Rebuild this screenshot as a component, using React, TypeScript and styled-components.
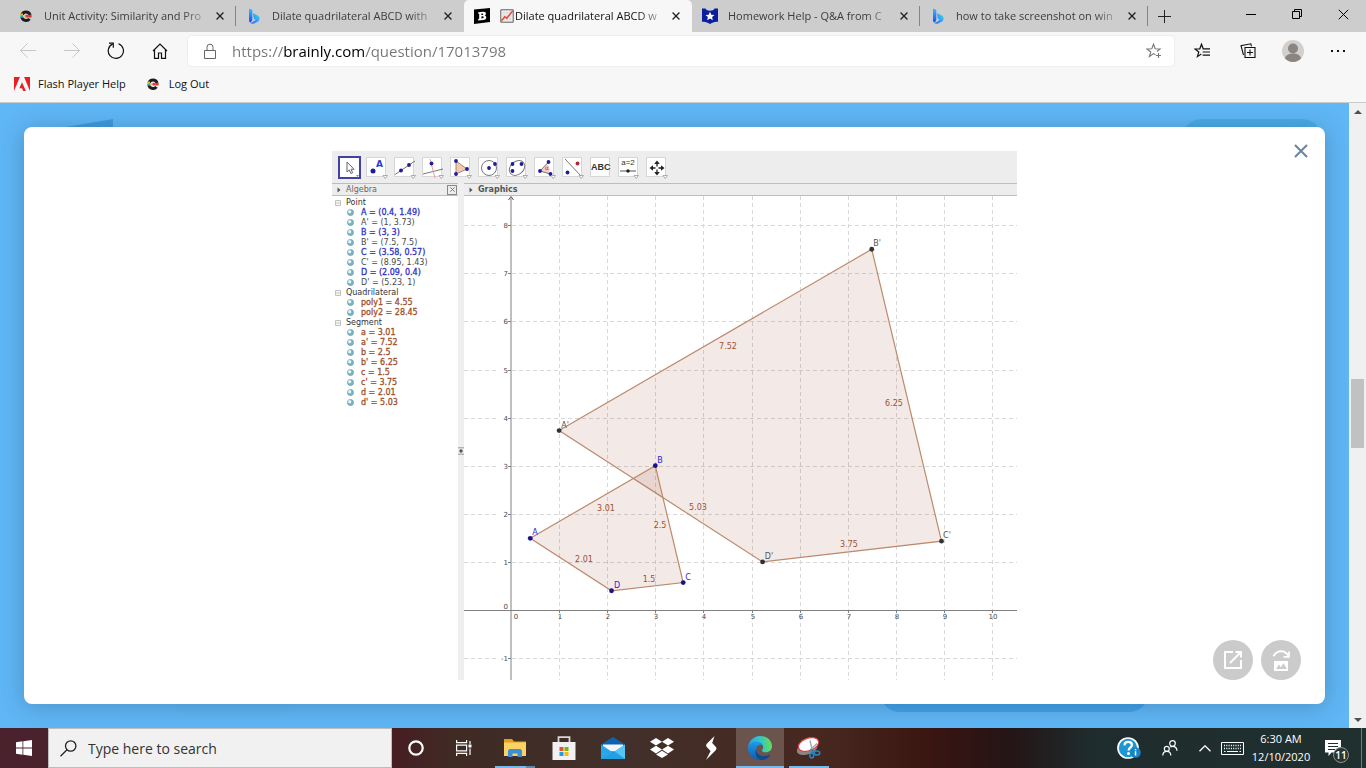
import React from "react";
import styled, { createGlobalStyle, css } from "styled-components";

const GlobalStyle = createGlobalStyle`
  *, *::before, *::after { box-sizing: border-box; }
  html, body { margin: 0; }
  body {
    font-family: "Segoe UI", "Open Sans", "Noto Sans", sans-serif;
    font-size: 12px;
    color: #111;
    background: #60b7f5;
  }
  button {
    font: inherit;
    color: inherit;
    margin: 0;
    padding: 0;
    border: 0;
    background: none;
  }
  svg { display: block; flex: none; }
`;

const Window = styled.div`
  min-height: 100vh;
  display: flex;
  flex-direction: column;
`;

/* ---------- tab strip ---------- */

const TabStrip = styled.header`
  height: 32px;
  display: flex;
  align-items: stretch;
  padding-left: 8px;
  background: #cdcdcd;
`;

const Tabs = styled.div`
  display: flex;
  min-width: 0;
`;

const Tab = styled.div<{ $active?: boolean; $divided?: boolean }>`
  width: 228px;
  min-width: 0;
  display: flex;
  align-items: center;
  padding: 0 8px 0 10px;
  color: ${(p) => (p.$active ? "#111" : "#3c3c3c")};
  background:
    ${(p) => (p.$divided ? "linear-gradient(#858585, #858585) right 6px / 1px 20px no-repeat" : "none")};
  ${(p) =>
    p.$active &&
    css`
      background: #f7f7f7;
      border-radius: 5px 5px 0 0;
    `}
`;

const TabTitle = styled.button`
  flex: 1;
  min-width: 0;
  display: flex;
  align-items: center;
  gap: 10px;
  height: 32px;
  text-align: left;
`;

const TabText = styled.span`
  flex: 1;
  min-width: 0;
  display: flex;
  align-items: center;
  gap: 1px;
  white-space: nowrap;
  font-size: 11px;
  line-height: 16px;
  mask-image: linear-gradient(to right, #000 calc(100% - 30px), transparent);
`;

const TabClose = styled.button`
  width: 16px;
  height: 16px;
  display: grid;
  place-items: center;
`;

const NewTab = styled.button`
  width: 32px;
  display: grid;
  place-items: center;
`;

const WindowControls = styled.div`
  margin-left: auto;
  display: flex;
`;

const WindowButton = styled.button`
  width: 46px;
  height: 28px;
  display: grid;
  place-items: center;
`;

/* ---------- toolbar ---------- */

const Toolbar = styled.div`
  background: #f7f7f7;
  border-bottom: 1px solid #cbcbcb;
  padding-bottom: 4px;
`;

const NavRow = styled.div`
  height: 38px;
  display: flex;
  align-items: center;
  padding: 0 6px 0 10px;
`;

const NavButtons = styled.nav`
  display: flex;
  gap: 8px;
  margin-right: 10px;
`;

const NavButton = styled.button`
  width: 36px;
  height: 30px;
  display: grid;
  place-items: center;
`;

const AddressBar = styled.div`
  flex: 1;
  min-width: 0;
  height: 30px;
  display: flex;
  align-items: center;
  padding: 0 2px 0 15px;
  gap: 15px;
  background: #fff;
  border-radius: 4px;
  box-shadow: 0 0 2px rgba(0, 0, 0, 0.12);
  margin-right: 6px;
`;

const AddressInput = styled.input`
  flex: 1;
  min-width: 0;
  height: 28px;
  padding: 0;
  border: 0;
  outline: 0;
  font-family: inherit;
  font-size: 15px;
  color: transparent;
  background: linear-gradient(to right, #757575 52px, #000 52px, #000 133px, #757575 133px);
  background-clip: text;
  -webkit-background-clip: text;
`;

const ToolButton = styled.button`
  width: 45px;
  height: 30px;
  display: grid;
  place-items: center;
`;

const Bookmarks = styled.nav`
  height: 28px;
  display: flex;
  align-items: center;
  gap: 19px;
  padding-left: 14px;
`;

const Bookmark = styled.a`
  display: flex;
  align-items: center;
  gap: 8px;
  color: #111;
  font-size: 11px;
  line-height: 16px;
  text-decoration: none;
`;

/* ---------- page ---------- */

const Page = styled.main`
  flex: 1;
  display: flex;
  align-items: stretch;
`;

const Backdrop = styled.div`
  position: relative;
  flex: 1;
  min-width: 0;
  overflow: hidden;
  padding: 24px;
  background: #60b7f5;
`;

const SHADES = {
  header: "right: 27px; top: 16px; width: 140px; background: #49ade6;",
  answer: "left: 880px; bottom: 16px; width: 269px; background: #44a3e6;",
  faint: "left: 174px; bottom: 10px; width: 123px; background: #5fb6f2;",
};

const Shade = styled.span<{ $kind: keyof typeof SHADES }>`
  position: absolute;
  height: 40px;
  border-radius: 20px;
  ${(p) => SHADES[p.$kind]}
`;

const LogoCorner = styled.svg`
  position: absolute;
  left: 66px;
  top: 16px;
`;

const Modal = styled.section`
  position: relative;
  height: 100%;
  display: flex;
  justify-content: center;
  align-items: flex-start;
  padding: 24px;
  background: #fff;
  border-radius: 8px;
  box-shadow: 0 2px 24px rgba(20, 50, 90, 0.3);
`;

const ModalClose = styled.button`
  position: absolute;
  top: 14px;
  right: 14px;
  width: 20px;
  height: 20px;
  display: grid;
  place-items: center;
`;

const ModalActions = styled.div`
  position: absolute;
  right: 24px;
  bottom: 24px;
  display: flex;
  gap: 8px;
`;

const RoundButton = styled.button`
  width: 40px;
  height: 40px;
  border-radius: 50%;
  background: #cbcbcb;
  display: grid;
  place-items: center;
`;

const ScrollBar = styled.div`
  width: 17px;
  display: flex;
  flex-direction: column;
  align-items: center;
  background: #f0f0f0;
`;

const ScrollArrow = styled.button`
  width: 17px;
  height: 17px;
  display: grid;
  place-items: center;
`;

const ScrollTrack = styled.div`
  flex: 1;
  display: flex;
  flex-direction: column;
  align-items: center;
`;

const ScrollSpace = styled.div<{ $grow: number }>`
  flex: ${(p) => p.$grow};
`;

const ScrollThumb = styled.div`
  width: 13px;
  height: 69px;
  background: #c1c1c1;
`;

/* ---------- geometry figure ---------- */

const Figure = styled.figure`
  margin: 0;
  width: 685px;
  font-family: "Lucida Grande", "DejaVu Sans", sans-serif;
  font-size: 8px;
  line-height: 10px;
  color: #333;
  background: #fff;
`;

const Tools = styled.div`
  height: 32px;
  display: flex;
  align-items: center;
  gap: 8px;
  padding-left: 6px;
  background: #ededed;
`;

const Tool = styled.button<{ $selected?: boolean }>`
  width: 20px;
  height: 20px;
  display: grid;
  place-items: center;
  background: #fff;
  border: 1px solid #d6d6d6;
  ${(p) =>
    p.$selected &&
    css`
      width: 23px;
      height: 23px;
      margin-right: -3px;
      border: 2px solid #4242a2;
    `}
`;

const ToolLabel = styled.span<{ $small?: boolean }>`
  font-family: "Liberation Sans", Arial, sans-serif;
  font-size: ${(p) => (p.$small ? 8 : 9)}px;
  font-weight: ${(p) => (p.$small ? 400 : 700)};
  line-height: 8px;
  color: #333;
`;

const Panels = styled.div`
  display: flex;
`;

const AlgebraPanel = styled.div`
  width: 126px;
`;

const GraphicsPanel = styled.div`
  flex: 1;
  min-width: 0;
`;

const PanelHead = styled.div<{ $bold?: boolean }>`
  height: 13px;
  display: flex;
  align-items: center;
  gap: 5px;
  padding: 0 1px 0 5px;
  background: #ededed;
  border-top: 1px solid #bdbdbd;
  border-bottom: 1px solid #bdbdbd;
  font-weight: ${(p) => (p.$bold ? 700 : 400)};
  color: ${(p) => (p.$bold ? "#555" : "#666")};
`;

const PanelClose = styled.button`
  margin-left: auto;
  width: 10px;
  height: 10px;
  display: grid;
  place-items: center;
  border: 1px solid #888;
`;

const Splitter = styled.div`
  width: 6px;
  display: grid;
  place-items: center;
  padding-top: 38px;
  background: #efefef;
`;

const ObjectList = styled.ul`
  list-style: none;
  margin: 0;
  padding: 2px 0 0;
`;

const GroupRow = styled.li`
  height: 10px;
  display: flex;
  align-items: center;
  gap: 5px;
  padding-left: 3px;
  white-space: nowrap;
`;

const ObjectRow = styled.li<{ $tone: string }>`
  height: 10px;
  display: flex;
  align-items: center;
  gap: 7px;
  padding-left: 15px;
  white-space: nowrap;
  color: ${(p) => p.$tone};
  -webkit-text-stroke: ${(p) => (p.$tone === GREY ? "0" : "0.3px")} currentColor;
`;

/* ---------- task bar ---------- */

const TaskBar = styled.footer`
  height: 40px;
  display: flex;
  align-items: stretch;
  color: #fff;
  background: linear-gradient(
    to right,
    #49222d 0,
    #471d22 392px,
    #3f2a24 450px,
    #42302a 620px,
    #46271f 830px,
    #3a1511 930px,
    #241416 1010px,
    #1f2c2d 1090px,
    #20302f 100%
  );
`;

const TaskButton = styled.button<{ $active?: boolean; $open?: boolean; $stacked?: boolean }>`
  width: 48px;
  display: grid;
  place-items: center;
  background: ${(p) => (p.$active ? "#6b544e" : "none")};
  ${(p) =>
    p.$active || p.$open
      ? css`
          background-image: linear-gradient(
            to right,
            #76b9ed 31px,
            ${p.$stacked ? "#5c88aa" : "#76b9ed"} 31px
          );
          background-repeat: no-repeat;
          background-position: bottom;
          background-size: ${p.$active ? "48px" : "40px"} 2px;
        `
      : ""}
`;

const SearchBox = styled.label`
  width: 344px;
  display: flex;
  align-items: center;
  gap: 11px;
  padding-left: 11px;
  border: 1px solid #bdbdbd;
  background: #f1f1f1;
`;

const SearchInput = styled.input`
  flex: 1;
  min-width: 0;
  padding: 0;
  border: 0;
  outline: 0;
  background: none;
  font-family: inherit;
  font-size: 14px;
  &::placeholder {
    color: #333;
    opacity: 1;
  }
`;

const Apps = styled.div`
  display: flex;
  gap: 1px;
  margin-left: 3px;
`;

const Tray = styled.div`
  margin-left: auto;
  display: flex;
  align-items: stretch;
`;

const TrayButton = styled.button<{ $width: number }>`
  width: ${(p) => p.$width}px;
  display: grid;
  place-items: center;
`;

const Clock = styled.button`
  width: 72px;
  display: flex;
  flex-direction: column;
  align-items: center;
  justify-content: center;
  font-size: 11px;
  line-height: 18px;
`;

const Notifications = styled.button`
  position: relative;
  width: 44px;
  display: flex;
  align-items: center;
  padding-left: 8px;
`;

const Count = styled.span`
  position: absolute;
  left: 16px;
  top: 19px;
  width: 16px;
  height: 16px;
  border: 1px solid #8c9494;
  border-radius: 50%;
  background: #2d3334;
  font-size: 10px;
  font-weight: 600;
  line-height: 14px;
  text-align: center;
`;

const ShowDesktop = styled.button`
  width: 5px;
  border-left: 1px solid #6f7a7b;
`;

/* ---------- icons ---------- */

const Cross = ({ size = 9, color = "#222", width = 1.3 }: { size?: number; color?: string; width?: number }) => (
  <svg width={size} height={size} viewBox="0 0 10 10" stroke={color} strokeWidth={(width * 10) / size} fill="none">
    <path d="M.7.7l8.6 8.6M9.3.7L.7 9.3" />
  </svg>
);

const EdmentumIcon = () => (
  <svg width="16" height="16" viewBox="0 0 16 16" fill="none">
    <path d="M3.900 7a4.300 4.300 0 0 1 8.200 0" stroke="#1c1c1c" strokeWidth="3" />
    <path d="M3.900 9a4.300 4.300 0 0 0 7.600 1.900" stroke="#1c1c1c" strokeWidth="3" />
    <path d="M2.500 5.500h2.500v2H2.500z" fill="#f2b51c" />
    <path d="M2.300 7.500H5v2.200H2.300z" fill="#28a3c4" />
    <path d="M5 7h2.500v2.500H5z" fill="#c9dd4a" />
    <path d="M7.500 6.800h2.800v2.700H7.500z" fill="#e8306d" />
    <path d="M10.300 6.800h3.300v2.700h-3.300z" fill="#e0301e" />
  </svg>
);

const BingIcon = () => (
  <svg width="16" height="16" viewBox="0 0 16 16">
    <defs>
      <linearGradient id="bingStem" x1="0" y1="0" x2="0" y2="1">
        <stop offset="0" stopColor="#37bdff" />
        <stop offset="1" stopColor="#1b48ef" />
      </linearGradient>
      <linearGradient id="bingBowl" x1="0" y1="1" x2="1" y2="0">
        <stop offset="0" stopColor="#2a67f2" />
        <stop offset="1" stopColor="#3cd8f2" />
      </linearGradient>
    </defs>
    <path d="M3 .5l2.600.9c.5.2.7.5.7 1V12l-1.500 2.500C3.500 14.200 3 13.400 3 12.400z" fill="url(#bingStem)" />
    <path d="M7.400 5.300l4.400 2.100c1.200.7 1.800 1.800 1.800 3 0 1.400-.8 2.600-2 3.300l-3.400 1.700c-1.300.6-3 .4-4.200-.7 1.300 0 2.100-.4 3-1l2.700-2-1.200-.7c-.5-.3-.8-.7-.9-1.200L7 6c-.1-.5.1-.8.4-.7z" fill="url(#bingBowl)" />
  </svg>
);

const BrainlyIcon = () => (
  <svg width="16" height="16" viewBox="0 0 16 16">
    <path d="M0 1.500L16 0v14L0 16z" fill="#000" />
    <path
      d="M4.200 4.200l5-.4c1.800-.1 2.700.6 2.700 1.900 0 .9-.5 1.500-1.300 1.800 1.100.2 1.700.9 1.700 2 0 1.500-1.100 2.400-3 2.500l-5.100.4v-1.500l1-.2V5.800l-1-.1zM7.400 5.600v1.500l1-.1c.6 0 .9-.3.9-.8s-.3-.7-.9-.7zM7.400 8.400v2l1.200-.1c.7 0 1-.4 1-1s-.4-1-1-1z"
      fill="#fff"
      fillRule="evenodd"
    />
  </svg>
);

const ChartEmoji = () => (
  <svg width="14" height="14" viewBox="0 0 14 14">
    <path d="M.8.8h12.400v12.400H.8z" fill="#f4f2f2" stroke="#5a5a5a" />
    <path d="M1 4h12M1 7h12M1 10h12M4 1v12M7 1v12M10 1v12" stroke="#cfc9c9" strokeWidth=".6" />
    <path d="M1.500 11.800l3.300-4 2 1.400L12.600 2" fill="none" stroke="#e5442f" strokeWidth="1.400" />
  </svg>
);

const StarBadge = () => (
  <svg width="16" height="16" viewBox="0 0 16 16">
    <path d="M0 .6h3.500c.7 1.800 2.200 2.200 4.500 2.200s3.800-.4 4.500-2.200H16v13.200c-3 0-5.600.6-8 2.200-2.400-1.600-5-2.200-8-2.200z" fill="#0b1e9d" />
    <path d="M8 3.800l1.300 2.900 3.200.3-2.400 2.100.7 3.100L8 10.600l-2.800 1.600.7-3.100L3.500 7l3.200-.3z" fill="#fff" />
  </svg>
);

const AdobeIcon = () => (
  <svg width="16" height="14" viewBox="0 0 16 14">
    <path d="M0 0h5.900L0 14zM10.100 0H16v14zM8 5.200l3.900 8.800H9.200L8 11.200H5.400z" fill="#ee1c25" />
  </svg>
);

const BackIcon = ({ flip }: { flip?: boolean }) => (
  <svg width="16" height="16" viewBox="0 0 16 16" fill="none" stroke="#c6c6c6">
    {flip ? <path d="M0 7.500h15.500M8.500.5l7 7-7 7" /> : <path d="M16 7.500H.5M7.500.5l-7 7 7 7" />}
  </svg>
);

const ReloadIcon = () => (
  <svg width="18" height="18" viewBox="0 0 18 18" fill="none" stroke="#111" strokeWidth="1.200">
    <path d="M11.500 1.700a7.600 7.600 0 1 1-5.800.2" />
    <path d="M2 1.200h4.300v4.600" />
  </svg>
);

const HomeIcon = () => (
  <svg width="16" height="16" viewBox="0 0 16 16" fill="none" stroke="#111" strokeWidth="1.200">
    <path d="M1 8l7-7 7 7M2.500 7v8.400H6.500V10h3v5.400h4V7" />
  </svg>
);

const LockIcon = () => (
  <svg width="14" height="17" viewBox="0 0 14 17" fill="none" stroke="#666">
    <path d="M1.500 7.500h11v8h-11zM4 7.500V4.200a3 3 0 0 1 6 0v3.300" />
  </svg>
);

const AddFavoriteIcon = () => (
  <svg width="16" height="16" viewBox="0 0 16 16" fill="none" stroke="#777" strokeWidth="1.100">
    <path d="M9.600 11.900l-2.100-1.300-4.100 2.900L4.800 9 .9 6l4.900-.2 1.700-4.600 1.700 4.600 4.900.2-3.200 2.500" />
    <path d="M12.500 10v5M10 12.500h5" />
  </svg>
);

const FavoritesIcon = () => (
  <svg width="17" height="16" viewBox="0 0 17 16" fill="none" stroke="#111" strokeWidth="1.200">
    <path d="M9.800 5.800l-.6 0-1.700-4.600-1.700 4.600L.9 6l3.900 3-1.400 4.700 3.900-2.600" />
    <path d="M9.500 5.900h6.500M8.600 9h7.400M8.600 12.100h7.400" />
  </svg>
);

const CollectionsIcon = () => (
  <svg width="16" height="16" viewBox="0 0 16 16" fill="none" stroke="#111" strokeWidth="1.100">
    <path d="M5 4.500h10v10H5zM10 6.500v6M7 9.500h6" />
    <path d="M3.500 12L1 2.600 10.800.8l.7 2.600" />
  </svg>
);

const AvatarIcon = () => (
  <svg width="22" height="22" viewBox="0 0 22 22">
    <circle cx="11" cy="11" r="11" fill="#d2d0ce" />
    <circle cx="11" cy="8.500" r="5" fill="#8a8580" />
    <path d="M2.800 18.300a8.400 6 0 0 1 16.400 0A11 11 0 0 1 11 22a11 11 0 0 1-8.200-3.700z" fill="#8a8580" />
  </svg>
);

const OpenIcon = () => (
  <svg width="20" height="20" viewBox="0 0 20 20" fill="none" stroke="#fff" strokeWidth="2">
    <path d="M10 2H2v16h16v-8M12.500 2H18v5.500M17.500 2.500L7 13" />
  </svg>
);

const RotateImageIcon = () => (
  <svg width="20" height="22" viewBox="0 0 20 22" fill="none">
    <path d="M2.500 7.200C4.500 3.400 7.500 2.200 10.200 2.200c3 0 5.300 1.500 7.300 4.500" stroke="#fff" strokeWidth="1.900" />
    <path d="M18 2.600v5.200h-5.500" stroke="#fff" strokeWidth="1.700" />
    <path d="M3 12h14v10H3z" fill="#fff" />
    <path d="M5 20l3-4.500 1.800 2.700 2.700-4L16 20z" fill="#cbcbcb" />
  </svg>
);

/* ---------- geometry tool drawings ---------- */

const BLUE = "#1d1d9c";

const Dot = ({ x, y, fill = BLUE, r = 1.9 }: { x: number; y: number; fill?: string; r?: number }) => (
  <circle cx={x} cy={y} r={r} fill={fill} />
);

const toolArt: { name: string; art: React.ReactNode }[] = [
  { name: "Move", art: <path d="M7 4v10l2.300-2 1.600 3.500 1.700-.8-1.500-3.400h3z" fill="#fff" stroke="#666" /> },
  {
    name: "Point",
    art: (
      <>
        <Dot x={6} y={13} r={2.5} />
        <text x="9" y="9" fontSize="9" fontWeight="700" fill="#2a3ed0">
          A
        </text>
      </>
    ),
  },
  {
    name: "Line",
    art: (
      <>
        <path d="M0 16.500L20 3" stroke="#777" />
        <Dot x={6} y={12.5} />
        <Dot x={14} y={7} />
      </>
    ),
  },
  {
    name: "Perpendicular line",
    art: (
      <>
        <path d="M0 16l20-5" stroke="#777" />
        <path d="M7 1l5 19" stroke="#eb9a9a" />
        <Dot x={8.5} y={5.5} />
      </>
    ),
  },
  {
    name: "Polygon",
    art: (
      <>
        <path d="M5 3l11 8-11 5z" fill="#efc9b4" stroke="#b98262" />
        <Dot x={5} y={3} />
        <Dot x={16} y={11} />
        <Dot x={5} y={16} />
      </>
    ),
  },
  {
    name: "Circle",
    art: (
      <>
        <circle cx="10" cy="10" r="7.500" fill="none" stroke="#777" />
        <Dot x={10} y={10} />
        <Dot x={16} y={6} />
      </>
    ),
  },
  {
    name: "Conic",
    art: (
      <>
        <ellipse cx="10" cy="10" rx="8.500" ry="6.500" fill="none" stroke="#777" transform="rotate(-40 10 10)" />
        <Dot x={5.5} y={6} />
        <Dot x={14.5} y={6} />
        <Dot x={5.5} y={13} />
      </>
    ),
  },
  {
    name: "Angle",
    art: (
      <>
        <path d="M5 13l6.500-7a7 7 0 0 1 2 9.500z" fill="#f9cccc" />
        <path d="M13.500 4L5 13l10.500 3" fill="none" stroke="#777" />
        <text x="10" y="12" fontSize="6" fill="#d33">
          α
        </text>
        <Dot x={13.5} y={4} />
        <Dot x={5} y={13} />
        <Dot x={15.5} y={16} />
      </>
    ),
  },
  {
    name: "Reflect",
    art: (
      <>
        <path d="M2 1l17 18" stroke="#777" />
        <Dot x={14.5} y={5.5} fill="#a8283a" />
        <Dot x={4.5} y={14.5} />
      </>
    ),
  },
  { name: "Text", art: null },
  { name: "Slider", art: null },
  {
    name: "Move view",
    art: (
      <>
        <path d="M10 4v12M4 10h12" stroke="#222" strokeWidth="1.300" strokeDasharray="4.500 3" />
        <path d="M10 2.500L12.800 6H7.200zM10 17.500L7.200 14h5.600zM2.500 10L6 7.200v5.600zM17.500 10L14 12.800V7.200z" fill="#222" />
      </>
    ),
  },
];

const DropMark = () => <path d="M16 17.500h4.500l-2.200 3z" fill="#fff" stroke="#999" strokeWidth=".8" />;

const ToolIcon = ({ art, small }: { art: React.ReactNode; small?: boolean }) => (
  <svg width="20" height="20" viewBox="0 0 20 20" overflow="visible">
    {art}
    {small ? <path d="M16 17h3l-1.500 2z" fill="#888" /> : <DropMark />}
  </svg>
);

const MiniSlider = () => (
  <svg width="18" height="6" viewBox="0 0 18 6" overflow="visible">
    <path d="M1 2h16" stroke="#555" />
    <circle cx="9" cy="2" r="1.700" fill="#222" />
    <path d="M15 6.500h4.500l-2.200 3z" fill="#fff" stroke="#999" strokeWidth=".8" />
  </svg>
);

/* ---------- algebra objects ---------- */

const GREY = "#484848";
const INK = "#3333c8";
const BROWN = "#a0522d";

const groups = [
  {
    title: "Point",
    items: [
      ["A = (0.4, 1.49)", INK],
      ["A' = (1, 3.73)", GREY],
      ["B = (3, 3)", INK],
      ["B' = (7.5, 7.5)", GREY],
      ["C = (3.58, 0.57)", INK],
      ["C' = (8.95, 1.43)", GREY],
      ["D = (2.09, 0.4)", INK],
      ["D' = (5.23, 1)", GREY],
    ],
  },
  {
    title: "Quadrilateral",
    items: [
      ["poly1 = 4.55", BROWN],
      ["poly2 = 28.45", BROWN],
    ],
  },
  {
    title: "Segment",
    items: [
      ["a = 3.01", BROWN],
      ["a' = 7.52", BROWN],
      ["b = 2.5", BROWN],
      ["b' = 6.25", BROWN],
      ["c = 1.5", BROWN],
      ["c' = 3.75", BROWN],
      ["d = 2.01", BROWN],
      ["d' = 5.03", BROWN],
    ],
  },
];

const Ball = () => (
  <svg width="7" height="8" viewBox="0 0 7 8">
    <circle cx="3.500" cy="3.500" r="3.100" fill="#79b3c6" stroke="#6d97a5" strokeWidth=".6" />
    <circle cx="2.700" cy="2.700" r="1.600" fill="#e4f6fb" />
  </svg>
);

const Collapse = () => (
  <svg width="6" height="6" viewBox="0 0 6 6">
    <path d="M.5.5h5v5h-5zM1.500 3h3" fill="#f4f4f4" stroke="#b4b4b4" strokeWidth=".8" />
  </svg>
);

const Arrow = () => (
  <svg width="4" height="6" viewBox="0 0 4 6">
    <path d="M.5.500L3.500 3 .5 5.500z" fill="#555" />
  </svg>
);

/* ---------- plot ---------- */

const UNIT = 48.1;
const px = (x: number) => 47 + x * UNIT;
const py = (y: number) => 414 - y * UNIT;

type Vertex = { name: string; x: number; y: number; dx: number; dy: number };

const preimage: Vertex[] = [
  { name: "A", x: 0.4, y: 1.49, dx: 5, dy: -3 },
  { name: "B", x: 3, y: 3, dx: 5, dy: -3 },
  { name: "C", x: 3.58, y: 0.57, dx: 5, dy: -3 },
  { name: "D", x: 2.09, y: 0.4, dx: 5, dy: -3 },
];

const image: Vertex[] = [
  { name: "A'", x: 1, y: 3.73, dx: 6, dy: -3 },
  { name: "B'", x: 7.5, y: 7.5, dx: 5, dy: -3 },
  { name: "C'", x: 8.95, y: 1.43, dx: 6, dy: -3 },
  { name: "D'", x: 5.23, y: 1, dx: 6, dy: -3 },
];

const lengths: [string, number, number][] = [
  ["7.52", 264, 153],
  ["6.25", 430, 210],
  ["3.01", 142, 315],
  ["5.03", 234, 314],
  ["2.5", 196, 332],
  ["2.01", 120, 366],
  ["1.5", 185, 386],
  ["3.75", 385, 351],
];

const range = (from: number, to: number) => Array.from({ length: to - from + 1 }, (_, i) => from + i);
const outline = (v: Vertex[]) => v.map((p) => `${px(p.x)},${py(p.y)}`).join(" ");

const Plot = () => (
  <svg width="100%" viewBox="0 0 553 484" fontSize="7" fill="#4c4c4c" role="img" aria-label="Quadrilateral ABCD and its dilation">
    <g stroke="#d8d8d8" strokeDasharray="4 3">
      {range(1, 10).map((x) => (
        <path key={x} d={`M${Math.round(px(x)) + 0.5} 0V484`} />
      ))}
      {range(-1, 8)
        .filter((y) => y !== 0)
        .map((y) => (
          <path key={y} d={`M0 ${Math.round(py(y)) + 0.5}H33M48 ${Math.round(py(y)) + 0.5}H553`} />
        ))}
    </g>
    <g stroke="#808080">
      <path d="M0 414.500H553M47 2V484" />
      {range(1, 10).map((x) => (
        <path key={x} d={`M${Math.round(px(x)) + 0.5} 414v3`} />
      ))}
      {range(-1, 8)
        .filter((y) => y !== 0)
        .map((y) => (
          <path key={y} d={`M44 ${Math.round(py(y)) + 0.5}h3`} />
        ))}
      <path d="M44.500 4L47 .5 49.500 4" fill="none" stroke="#555" />
    </g>
    <g textAnchor="middle">
      <text x="52" y="423">0</text>
      {range(1, 10).map((x) => (
        <text key={x} x={Math.round(px(x)) + 1} y="423">
          {x}
        </text>
      ))}
    </g>
    <g textAnchor="end">
      <text x="44" y="413">0</text>
      {range(-1, 8)
        .filter((y) => y !== 0)
        .map((y) => (
          <text key={y} x="44" y={Math.round(py(y)) + 3}>
            {y}
          </text>
        ))}
    </g>
    {[image, preimage].map((shape, i) => (
      <polygon key={i} points={outline(shape)} fill="#882c08" fillOpacity=".1" stroke="#bd8a6c" strokeWidth="1.200" />
    ))}
    <g textAnchor="middle" fontSize="8" fill={BROWN}>
      {lengths.map(([label, x, y]) => (
        <text key={label} x={x} y={y}>
          {label}
        </text>
      ))}
    </g>
    {[preimage, image].map((shape, i) => (
      <g key={i} textAnchor="middle" fontSize="8" fill={i ? "#555" : "#2a2ad0"}>
        {shape.map((p) => (
          <React.Fragment key={p.name}>
            <circle cx={px(p.x)} cy={py(p.y)} r="2.400" fill={i ? "#333" : "#14148c"} />
            <text x={Math.round(px(p.x)) + p.dx} y={Math.round(py(p.y)) + p.dy}>
              {p.name}
            </text>
          </React.Fragment>
        ))}
      </g>
    ))}
  </svg>
);

const GeometryFigure = () => (
  <Figure>
    <Tools>
      {toolArt.map((t, i) => (
        <Tool key={t.name} $selected={i === 0} aria-label={t.name}>
          {t.name === "Text" ? (
            <ToolLabel>ABC</ToolLabel>
          ) : t.name === "Slider" ? (
            <>
              <ToolLabel $small>a=2</ToolLabel>
              <MiniSlider />
            </>
          ) : (
            <ToolIcon art={t.art} small={i === 0} />
          )}
        </Tool>
      ))}
    </Tools>
    <Panels>
      <AlgebraPanel>
        <PanelHead>
          <Arrow />
          Algebra
          <PanelClose aria-label="Close algebra">
            <Cross size={5} width={0.8} color="#666" />
          </PanelClose>
        </PanelHead>
        <ObjectList>
          {groups.map((g) => (
            <React.Fragment key={g.title}>
              <GroupRow>
                <Collapse />
                {g.title}
              </GroupRow>
              {g.items.map(([text, tone]) => (
                <ObjectRow key={text} $tone={tone}>
                  <Ball />
                  {text}
                </ObjectRow>
              ))}
            </React.Fragment>
          ))}
        </ObjectList>
      </AlgebraPanel>
      <Splitter>
        <svg width="6" height="8" viewBox="0 0 6 8">
          <path d="M0 .8h6M0 7.200h6" stroke="#999" />
          <circle cx="3" cy="4" r="1.700" fill="#555" />
        </svg>
      </Splitter>
      <GraphicsPanel>
        <PanelHead $bold>
          <Arrow />
          Graphics
        </PanelHead>
        <Plot />
      </GraphicsPanel>
    </Panels>
  </Figure>
);

/* ---------- app icons ---------- */

const CortanaIcon = () => (
  <svg width="18" height="18" viewBox="0 0 18 18" fill="none" stroke="#fff" strokeWidth="2.200">
    <circle cx="9" cy="9" r="6.700" />
  </svg>
);

const TaskViewIcon = () => (
  <svg width="16" height="16" viewBox="0 0 16 16" fill="none" stroke="#fff" strokeWidth="1.200">
    <path d="M.6 0v2.600h10V0M.6 16v-2.600h10V16M.6 5.200h10v5.600H.6zM14 1v3M14 8.500V15" />
    <path d="M12.500 4.500h3v3h-3z" fill="#fff" stroke="none" />
  </svg>
);

const ExplorerIcon = () => (
  <svg width="22" height="18" viewBox="0 0 22 18">
    <path d="M0 0h8l2 2.500h12V10H0z" fill="#e0a21a" />
    <path d="M0 3.500h22V17H0z" fill="#fdd264" />
    <path d="M4 18v-6.500l1.500-1.500h11l1.500 1.500V18h-4.500v-3.500h-5V18z" fill="#3d8fd6" />
  </svg>
);

const StoreIcon = () => (
  <svg width="24" height="24" viewBox="0 0 24 24">
    <path d="M6.500 7V1.200h11V7" fill="none" stroke="#d8d8d8" strokeWidth="1.800" />
    <path d="M.5 6h23v18H.5z" fill="#f1f1f1" />
    <path d="M7.500 11h4v4h-4z" fill="#e8502a" />
    <path d="M12.500 11h4v4h-4z" fill="#7db700" />
    <path d="M7.500 16h4v4h-4z" fill="#1ba0e2" />
    <path d="M12.500 16h4v4h-4z" fill="#fbb813" />
  </svg>
);

const MailIcon = () => (
  <svg width="24" height="22" viewBox="0 0 24 22">
    <path d="M0 7.500L12 0l12 7.500v2H0z" fill="#0f62b0" />
    <path d="M2 7.500h20v7H2z" fill="#f4f6f8" />
    <path d="M0 7.500l12 8 12-8V22H0z" fill="#28a8ea" />
    <path d="M14 14.200L24 7.500V22z" fill="#58c6f5" />
    <path d="M0 22l12-7 12 7z" fill="#1c93dd" opacity=".4" />
  </svg>
);

const DropboxIcon = () => (
  <svg width="24" height="20" viewBox="0 0 24 20" fill="#fff">
    <path d="M6 0l6 3.800-6 3.800-6-3.800zM18 0l6 3.800-6 3.800-6-3.800zM6 7.800l6 3.800-6 3.800-6-3.800zM18 7.800l6 3.800-6 3.800-6-3.800zM12 12.700l6 3.700-6 3.600-6-3.600z" />
  </svg>
);

const BoltIcon = () => (
  <svg width="12" height="24" viewBox="0 0 12 24" fill="#fff">
    <path d="M9.500 0L2 7.500c-1.200 1.300-1 2.700 0 3.800L5.600 15 1 24l9.700-9.800c1-1.200 1-2.400 0-3.500L7.200 7z" />
  </svg>
);

const EdgeIcon = () => (
  <svg width="24" height="24" viewBox="0 0 24 24">
    <defs>
      <linearGradient id="edgeTop" x1="0" y1=".5" x2="1" y2=".4">
        <stop offset="0" stopColor="#2b9fe6" />
        <stop offset=".5" stopColor="#32c4d0" />
        <stop offset="1" stopColor="#66e04e" />
      </linearGradient>
      <linearGradient id="edgeLow" x1="0" y1="0" x2="0" y2="1">
        <stop offset="0" stopColor="#1f9ce4" />
        <stop offset="1" stopColor="#0e5bb5" />
      </linearGradient>
    </defs>
    <path d="M.2 10.800C1 4.500 6 0 12.200 0 19 0 24 5 24 10.300c0 3.700-2.700 6-6 6-2.600 0-4.200-1-4-2 .2-.8 1.200-1.300 1.200-3 0-2.500-2.400-4.800-6-4.800-4 0-7.300 2-9 4.300z" fill="url(#edgeTop)" />
    <path d="M0 12c.3-3.600 4-6.400 8.200-6.400 3 0 5.500 1.200 6.500 3.400-5-1.600-7.300 2.400-6.200 6.200 1 3.700 5 6.200 9.500 5.800l3.600-1.500C19.500 22.400 16 24 12 24 5.200 24 0 18.700 0 12z" fill="url(#edgeLow)" />
    <path d="M8.300 13c-.6 5.300 5.200 8.800 13.300 6.100.6-.3.9 0 .6.500C20.500 22 17.500 24 13.500 24 8.500 23 6.300 17.500 8.300 13z" fill="#12488c" />
  </svg>
);

const SnipIcon = () => (
  <svg width="24" height="22" viewBox="0 0 24 22" fill="none">
    <ellipse cx="10" cy="12" rx="10.500" ry="5.500" transform="rotate(-15 10 12)" fill="#8d8484" />
    <ellipse cx="11.500" cy="7.500" rx="10.500" ry="6.300" transform="rotate(-20 11.500 7.500)" fill="#fff" stroke="#d8433f" strokeWidth="1.200" />
    <path d="M13 3.500l2 9M20 6.500l-7 6.500" stroke="#9aa5ad" strokeWidth="1.300" />
    <ellipse cx="20" cy="16" rx="2.800" ry="1.900" stroke="#2587c7" strokeWidth="1.500" />
    <ellipse cx="14.800" cy="18.500" rx="1.900" ry="2.500" stroke="#2587c7" strokeWidth="1.500" />
    <path d="M13.500 12.500l4.300 2.500M16 12.500l-1.200 3.500" stroke="#2587c7" strokeWidth="1.500" />
  </svg>
);

const HelpIcon = () => (
  <svg width="24" height="22" viewBox="0 0 24 22">
    <circle cx="11" cy="11" r="10" fill="#1e96d4" stroke="#fff" strokeWidth="1.700" />
    <path d="M7.400 8.300c.2-2.300 1.800-3.400 3.800-3.400 2.200 0 3.700 1.200 3.700 3.100 0 2.600-3.300 2.700-3.300 5.400" fill="none" stroke="#fff" strokeWidth="2.200" />
    <circle cx="11.500" cy="16.600" r="1.500" fill="#fff" />
    <circle cx="18.500" cy="15.500" r="5.300" fill="#1685c4" />
    <path d="M17.800 14.200h1.500v4.300h-1.500zM17.800 12h1.500v1.300h-1.500z" fill="#fff" />
  </svg>
);

const PeopleIcon = () => (
  <svg width="16" height="16" viewBox="0 0 16 16" fill="none" stroke="#fff" strokeWidth="1.200">
    <circle cx="10.500" cy="3.500" r="2.800" />
    <circle cx="4.800" cy="8.800" r="2.500" />
    <path d="M.8 15.500c0-2.600 1.600-4.200 4-4.200s4 1.600 4 4.200M8.300 7c.7-.5 1.400-.7 2.200-.7 2.500 0 4.300 1.700 4.500 4.500" />
  </svg>
);

const KeyboardIcon = () => (
  <svg width="23" height="13" viewBox="0 0 23 13" fill="none" stroke="#fff">
    <path d="M.5.5h22v12H.5z" />
    <path d="M3 3.500h17M3 6.500h17" strokeDasharray="1 1.300" strokeWidth="1.400" />
    <path d="M3 9.500h1.500M6 9.500h11M18.500 9.500H20" strokeWidth="1.200" />
  </svg>
);

const MessageIcon = () => (
  <svg width="16" height="16" viewBox="0 0 16 16">
    <path d="M0 0h16v12.500H6.500L3.500 16v-3.500H0z" fill="#fff" />
    <path d="M3 3.500h10M3 6.500h10M3 9.500h7" stroke="#20302f" />
  </svg>
);

const tabs = [
  { icon: <EdmentumIcon />, title: "Unit Activity: Similarity and Pro", divided: true },
  { icon: <BingIcon />, title: "Dilate quadrilateral ABCD with" },
  { icon: <BrainlyIcon />, title: "Dilate quadrilateral ABCD w", active: true },
  { icon: <StarBadge />, title: "Homework Help - Q&A from C", divided: true },
  { icon: <BingIcon />, title: "how to take screenshot on win", divided: true },
];

export default function App() {
  return (
    <Window>
      <GlobalStyle />
      <TabStrip>
        <Tabs role="tablist">
          {tabs.map((t, i) => (
            <Tab key={i} $active={t.active} $divided={t.divided}>
              <TabTitle role="tab" aria-selected={!!t.active}>
                {t.icon}
                <TabText>
                  {t.active && <ChartEmoji />}
                  {t.title}
                </TabText>
              </TabTitle>
              <TabClose aria-label="Close tab">
                <Cross size={8} />
              </TabClose>
            </Tab>
          ))}
        </Tabs>
        <NewTab aria-label="New tab">
          <svg width="13" height="13" viewBox="0 0 13 13" stroke="#222">
            <path d="M6.500 0v13M0 6.500h13" />
          </svg>
        </NewTab>
        <WindowControls>
          <WindowButton aria-label="Minimize">
            <svg width="10" height="10" viewBox="0 0 10 10" stroke="#000">
              <path d="M0 5.500h10" />
            </svg>
          </WindowButton>
          <WindowButton aria-label="Restore">
            <svg width="10" height="10" viewBox="0 0 10 10" stroke="#000" fill="none">
              <path d="M.5 2.500h7v7h-7zM2.500 2.500v-2h7v7h-2" />
            </svg>
          </WindowButton>
          <WindowButton aria-label="Close">
            <Cross size={11} width={1} color="#000" />
          </WindowButton>
        </WindowControls>
      </TabStrip>

      <Toolbar>
        <NavRow>
          <NavButtons aria-label="Browser">
            <NavButton aria-label="Back">
              <BackIcon />
            </NavButton>
            <NavButton aria-label="Forward">
              <BackIcon flip />
            </NavButton>
            <NavButton aria-label="Reload">
              <ReloadIcon />
            </NavButton>
            <NavButton aria-label="Home">
              <HomeIcon />
            </NavButton>
          </NavButtons>
          <AddressBar>
            <LockIcon />
            <AddressInput aria-label="Address" defaultValue="https://brainly.com/question/17013798" />
            <NavButton aria-label="Add to favorites">
              <AddFavoriteIcon />
            </NavButton>
          </AddressBar>
          <ToolButton aria-label="Favorites">
            <FavoritesIcon />
          </ToolButton>
          <ToolButton aria-label="Collections">
            <CollectionsIcon />
          </ToolButton>
          <ToolButton aria-label="Profile">
            <AvatarIcon />
          </ToolButton>
          <ToolButton aria-label="Settings">
            <svg width="16" height="4" viewBox="0 0 16 4" fill="#111">
              <path d="M1 1h2v2H1zM7 1h2v2H7zM13 1h2v2h-2z" />
            </svg>
          </ToolButton>
        </NavRow>
        <Bookmarks aria-label="Favorites bar">
          <Bookmark href="#flash">
            <AdobeIcon />
            Flash Player Help
          </Bookmark>
          <Bookmark href="#logout">
            <EdmentumIcon />
            Log Out
          </Bookmark>
        </Bookmarks>
      </Toolbar>

      <Page>
        <Backdrop>
          <LogoCorner width="47" height="24" viewBox="0 0 47 24">
            <path d="M0 8L47 0v24H0z" fill="#3f9cdc" />
          </LogoCorner>
          <Shade $kind="header" />
          <Shade $kind="answer" />
          <Shade $kind="faint" />
          <Modal role="dialog" aria-label="Attachment">
            <GeometryFigure />
            <ModalClose aria-label="Close">
              <Cross size={14} width={2} color="#6d83a0" />
            </ModalClose>
            <ModalActions>
              <RoundButton aria-label="Open in new tab">
                <OpenIcon />
              </RoundButton>
              <RoundButton aria-label="Rotate image">
                <RotateImageIcon />
              </RoundButton>
            </ModalActions>
          </Modal>
        </Backdrop>
        <ScrollBar>
          <ScrollArrow aria-label="Scroll up">
            <svg width="8" height="4" viewBox="0 0 8 4">
              <path d="M4 0l4 4H0z" fill="#505050" />
            </svg>
          </ScrollArrow>
          <ScrollTrack>
            <ScrollSpace $grow={259} />
            <ScrollThumb />
            <ScrollSpace $grow={263} />
          </ScrollTrack>
          <ScrollArrow aria-label="Scroll down">
            <svg width="8" height="4" viewBox="0 0 8 4">
              <path d="M0 0h8L4 4z" fill="#505050" />
            </svg>
          </ScrollArrow>
        </ScrollBar>
      </Page>

      <TaskBar>
        <TaskButton aria-label="Start">
          <svg width="16" height="16" viewBox="0 0 16 16" fill="#fff">
            <path d="M0 2.200l6.500-.9v6.200H0zM7.300 1.200L16 0v7.500H7.300zM0 8.400h6.500v6.300L0 13.800zM7.300 8.400H16V16l-8.700-1.200z" />
          </svg>
        </TaskButton>
        <SearchBox>
          <svg width="17" height="17" viewBox="0 0 17 17" fill="none" stroke="#222" strokeWidth="1.300">
            <circle cx="10.700" cy="6" r="5.200" />
            <path d="M7 9.800L.5 16.300" />
          </svg>
          <SearchInput aria-label="Search" placeholder="Type here to search" />
        </SearchBox>
        <TaskButton aria-label="Cortana">
          <CortanaIcon />
        </TaskButton>
        <TaskButton aria-label="Task view">
          <TaskViewIcon />
        </TaskButton>
        <Apps>
          <TaskButton $open $stacked aria-label="File Explorer">
            <ExplorerIcon />
          </TaskButton>
          <TaskButton aria-label="Store">
            <StoreIcon />
          </TaskButton>
          <TaskButton aria-label="Mail">
            <MailIcon />
          </TaskButton>
          <TaskButton aria-label="Dropbox">
            <DropboxIcon />
          </TaskButton>
          <TaskButton aria-label="Power tools">
            <BoltIcon />
          </TaskButton>
          <TaskButton $active aria-label="Edge">
            <EdgeIcon />
          </TaskButton>
          <TaskButton $open aria-label="Snipping Tool">
            <SnipIcon />
          </TaskButton>
        </Apps>
        <Tray>
          <TrayButton $width={40} aria-label="Help">
            <HelpIcon />
          </TrayButton>
          <TrayButton $width={41} aria-label="People">
            <PeopleIcon />
          </TrayButton>
          <TrayButton $width={30} aria-label="Show hidden icons">
            <svg width="12" height="7" viewBox="0 0 12 7" fill="none" stroke="#fff" strokeWidth="1.300">
              <path d="M.5 6.300L6 .8l5.500 5.500" />
            </svg>
          </TrayButton>
          <TrayButton $width={25} aria-label="Keyboard">
            <KeyboardIcon />
          </TrayButton>
          <Clock>
            <span>6:30 AM</span>
            <span>12/10/2020</span>
          </Clock>
          <Notifications aria-label="Notifications">
            <MessageIcon />
            <Count>11</Count>
          </Notifications>
          <ShowDesktop aria-label="Show desktop" />
        </Tray>
      </TaskBar>
    </Window>
  );
}
